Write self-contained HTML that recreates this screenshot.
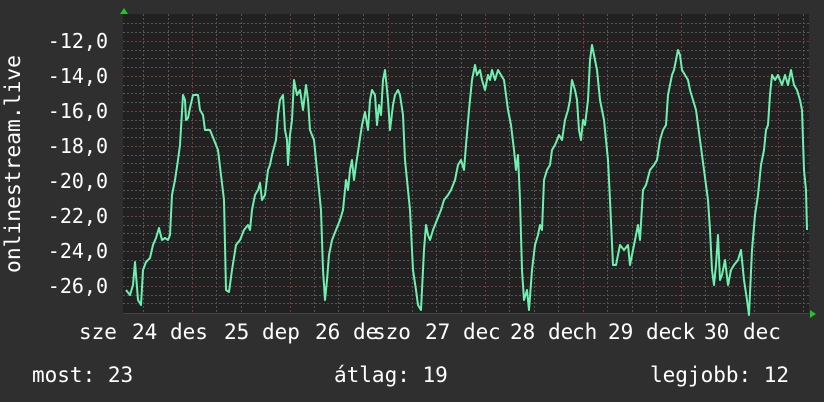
<!DOCTYPE html>
<html><head><meta charset="utf-8"><style>
html,body{margin:0;padding:0;background:#2f2f2f;}
svg{display:block}
text{font-family:"DejaVu Sans Mono","Liberation Mono",monospace;font-size:21px;fill:#fff}
text.y{font-size:20px}
</style></head><body>
<svg width="824" height="402" viewBox="0 0 824 402" xmlns="http://www.w3.org/2000/svg">
<rect width="824" height="402" fill="#2f2f2f"/>
<rect x="123" y="14" width="686" height="299" fill="#212121"/>
<g stroke="#555" stroke-width="1" stroke-dasharray="2,2" fill="none">
<path d="M143.5 14V313M168.5 14V313M216.5 14V313M241.5 14V313M265.5 14V313M314.5 14V313M338.5 14V313M363.5 14V313M412.5 14V313M436.5 14V313M461.5 14V313M509.5 14V313M534.5 14V313M558.5 14V313M607.5 14V313M632.5 14V313M656.5 14V313M705.5 14V313M729.5 14V313M754.5 14V313M803.5 14V313"/>
<path d="M123 23.5H809M123 32.5H809M123 50.5H809M123 58.5H809M123 67.5H809M123 85.5H809M123 93.5H809M123 102.5H809M123 120.5H809M123 128.5H809M123 137.5H809M123 155.5H809M123 163.5H809M123 172.5H809M123 190.5H809M123 198.5H809M123 207.5H809M123 225.5H809M123 233.5H809M123 242.5H809M123 260.5H809M123 268.5H809M123 277.5H809M123 295.5H809M123 303.5H809"/>
</g>
<g stroke="#7a3a3a" stroke-width="1" stroke-dasharray="2,2" fill="none">
<path d="M192.5 14V313M290.5 14V313M388.5 14V313M485.5 14V313M583.5 14V313M681.5 14V313M778.5 14V313"/>
<path d="M123 41.5H809M123 76.5H809M123 111.5H809M123 146.5H809M123 181.5H809M123 216.5H809M123 251.5H809M123 286.5H809"/>
</g>
<path d="M123 313.5H812" stroke="#444" stroke-width="1"/>
<path d="M120 14l4-6 4 6z" fill="#1ec81e"/>
<path d="M810 310l6 4-6 4z" fill="#1ec81e"/>
<polyline fill="none" stroke="#6ff0b0" stroke-width="2" stroke-linejoin="round" points="126,290 130,295 133,285 135,262 138,300 141,305 143,270 146,262 150,258 153,245 156,238 159,228 162,240 165,238 168,240 170,235 172,195 175,180 178,160 180,145 183,95 185,100 186,120 188,118 190,108 193,95 198,95 200,110 203,115 205,130 210,130 214,140 218,150 221,175 224,200 226,290 229,292 232,270 236,245 240,240 244,230 248,225 250,230 252,210 255,195 258,190 260,183 262,200 265,195 268,170 270,165 272,155 276,140 278,115 280,100 283,95 285,130 287,140 288,165 290,135 292,120 294,80 297,95 300,90 303,110 306,85 308,100 310,130 314,140 318,180 321,210 323,270 325,300 327,280 329,255 332,240 336,230 340,220 343,210 346,180 348,190 350,170 352,160 354,180 356,165 359,145 362,125 365,112 368,130 370,100 372,90 375,95 377,125 379,105 381,115 383,80 385,70 388,100 390,130 393,105 395,95 398,90 400,95 403,115 405,160 408,190 410,210 413,270 416,290 418,305 421,310 424,250 426,225 428,235 430,240 433,230 437,220 441,210 444,200 448,195 451,190 455,180 458,165 461,160 464,170 466,145 469,110 472,80 475,65 477,75 480,70 482,80 485,90 488,75 490,80 492,70 495,80 498,70 501,75 504,80 508,110 511,125 514,150 516,170 518,155 520,200 522,270 524,300 527,290 529,310 532,270 535,245 538,235 540,225 542,230 544,180 547,170 550,165 552,150 555,145 557,140 559,135 562,140 565,120 568,110 570,100 572,80 575,90 577,100 579,130 581,140 583,120 585,125 588,100 590,60 592,45 594,55 597,70 600,100 604,120 608,160 610,200 613,265 616,265 620,245 624,250 628,245 630,265 632,255 635,240 638,225 640,240 643,190 646,185 650,170 654,165 657,160 660,140 663,130 666,125 668,95 670,85 672,75 674,70 676,60 678,50 680,55 682,70 685,75 688,80 690,90 693,100 696,110 700,140 704,170 708,200 710,230 712,270 714,285 716,265 718,235 720,280 722,275 725,260 728,285 731,270 734,265 738,260 741,250 744,280 747,300 749,315 752,250 755,215 758,195 761,165 764,150 766,130 768,125 770,95 772,75 775,80 778,75 782,85 785,75 788,85 791,70 794,85 797,90 800,100 802,110 804,170 806,190 807,230"/>
<g text-anchor="end">
<text class="y" x="108" y="48">-12,0</text>
<text class="y" x="108" y="83">-14,0</text>
<text class="y" x="108" y="118">-16,0</text>
<text class="y" x="108" y="153">-18,0</text>
<text class="y" x="108" y="188">-20,0</text>
<text class="y" x="108" y="223">-22,0</text>
<text class="y" x="108" y="258">-24,0</text>
<text class="y" x="108" y="293">-26,0</text>
</g>
<text transform="translate(20,273) rotate(-90)" x="0" y="0" textLength="218" lengthAdjust="spacingAndGlyphs">onlinestream.live</text>
<text x="79" y="339">sze</text>
<text x="132" y="339">24</text>
<text x="170" y="339">des</text>
<text x="224" y="339">25</text>
<text x="262" y="339">dep</text>
<text x="315" y="339">26</text>
<text x="353" y="339">de</text>
<text x="373" y="339">szo</text>
<text x="425" y="339">27</text>
<text x="463" y="339">de</text>
<text x="488" y="339">c</text>
<text x="510" y="339">28</text>
<text x="548" y="339">de</text>
<text x="572" y="339">ch</text>
<text x="608" y="339">29</text>
<text x="646" y="339">de</text>
<text x="670" y="339">ck</text>
<text x="704" y="339">30</text>
<text x="743" y="339">dec</text>
<text x="32" y="382">most: 23</text>
<text x="334" y="382">átlag: 19</text>
<text x="650" y="382">legjobb: 12</text>
</svg>
</body></html>
